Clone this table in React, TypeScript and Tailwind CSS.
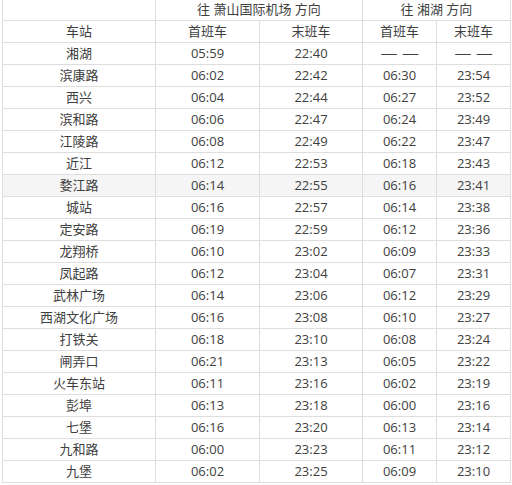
import React from "react";

const rows: [string, string, string, string, string][] = [
  ["湘湖", "05:59", "22:40", "— —", "— —"],
  ["滨康路", "06:02", "22:42", "06:30", "23:54"],
  ["西兴", "06:04", "22:44", "06:27", "23:52"],
  ["滨和路", "06:06", "22:47", "06:24", "23:49"],
  ["江陵路", "06:08", "22:49", "06:22", "23:47"],
  ["近江", "06:12", "22:53", "06:18", "23:43"],
  ["婺江路", "06:14", "22:55", "06:16", "23:41"],
  ["城站", "06:16", "22:57", "06:14", "23:38"],
  ["定安路", "06:19", "22:59", "06:12", "23:36"],
  ["龙翔桥", "06:10", "23:02", "06:09", "23:33"],
  ["凤起路", "06:12", "23:04", "06:07", "23:31"],
  ["武林广场", "06:14", "23:06", "06:12", "23:29"],
  ["西湖文化广场", "06:16", "23:08", "06:10", "23:27"],
  ["打铁关", "06:18", "23:10", "06:08", "23:24"],
  ["闸弄口", "06:21", "23:13", "06:05", "23:22"],
  ["火车东站", "06:11", "23:16", "06:02", "23:19"],
  ["彭埠", "06:13", "23:18", "06:00", "23:16"],
  ["七堡", "06:16", "23:20", "06:13", "23:14"],
  ["九和路", "06:00", "23:23", "06:11", "23:12"],
  ["九堡", "06:02", "23:25", "06:09", "23:10"],
];

const widths = ["w-[153px]", "w-[104px]", "w-[103px]", "w-[74px]", "w-[74px]"];

function Cell({ w, children }: { w: string; children?: React.ReactNode }) {
  return (
    <div className={`${w} h-full shrink-0 flex items-center justify-center border-r border-[#dedede]`}>
      {children}
    </div>
  );
}

function Content({ text }: { text: string }) {
  if (text === "— —") {
    return <span className="inline-block scale-x-[1.3]">— —</span>;
  }
  return <>{text}</>;
}

export default function App() {
  return (
    <div
      className="w-[512px] h-[485px] bg-white overflow-hidden text-[13px] text-[#404040]"
      style={{ fontFamily: '"Open Sans", "Noto Sans CJK SC", sans-serif' }}
    >
      <div className="ml-[2px] w-[509px] border-l border-[#dedede]">
        <div className="flex h-[21px] border-b border-[#dedede]">
          <Cell w="w-[153px]" />
          <Cell w="w-[207px]">往 萧山国际机场 方向</Cell>
          <Cell w="w-[148px]">往 湘湖 方向</Cell>
        </div>
        <div className="flex h-[22px] border-b border-[#dedede]">
          <Cell w={widths[0]}>车站</Cell>
          <Cell w={widths[1]}>首班车</Cell>
          <Cell w={widths[2]}>末班车</Cell>
          <Cell w={widths[3]}>首班车</Cell>
          <Cell w={widths[4]}>末班车</Cell>
        </div>
        {rows.map((r, i) => (
          <div
            key={i}
            className={`flex h-[22px] border-b border-[#dedede] ${i === 6 ? "bg-[#f5f5f5]" : ""}`}
          >
            {r.map((c, j) => (
              <Cell key={j} w={widths[j]}>
                <Content text={c} />
              </Cell>
            ))}
          </div>
        ))}
      </div>
    </div>
  );
}
